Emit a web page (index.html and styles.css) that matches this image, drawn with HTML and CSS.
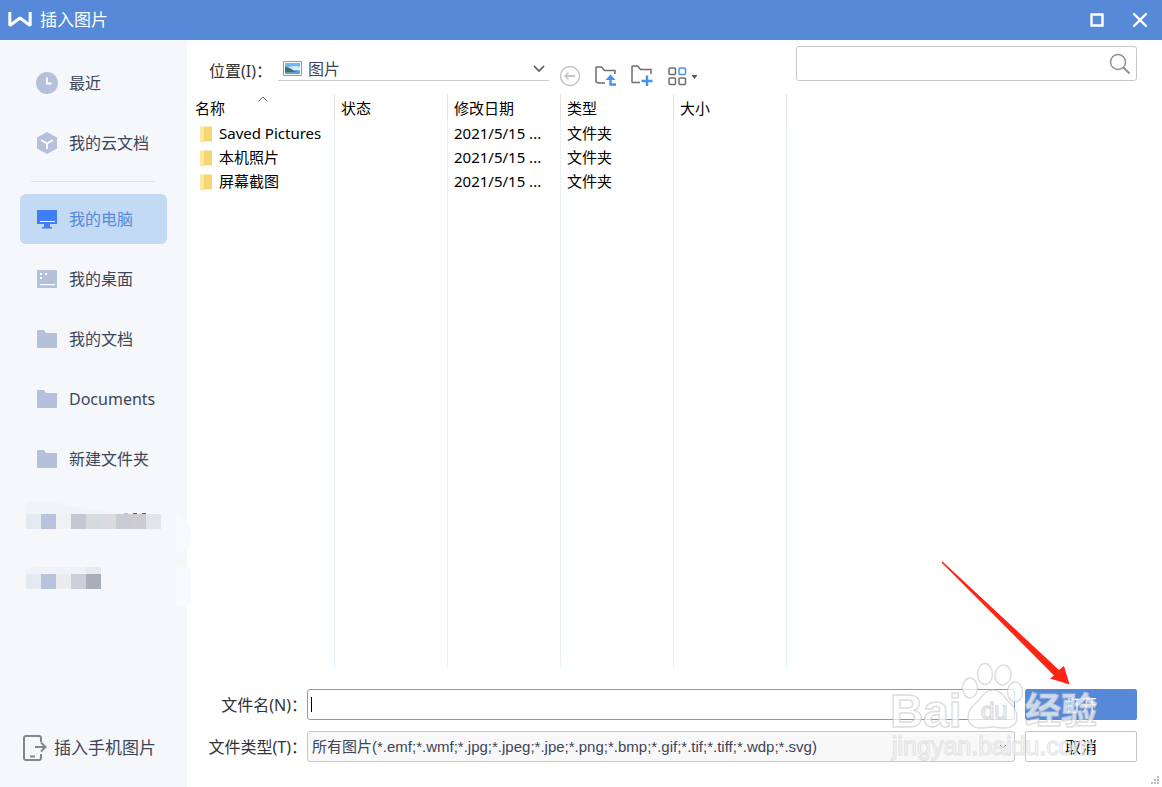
FILE: index.html
```html
<!DOCTYPE html>
<html lang="zh-CN">
<head>
    <meta charset="UTF-8">
    <meta name="viewport" content="width=device-width, initial-scale=1.0">
    <title>插入图片</title>
    <link rel="stylesheet" href="styles.css">
</head>
<body>
    <!-- Title bar -->
    <header class="titlebar">
        <svg width="24" height="16" viewBox="0 0 24 16" fill="none" stroke="#fff" stroke-width="3"><path d="M1.8 0v13.500L12 6l10.200 7.500V0" stroke-linejoin="bevel"/></svg>
        <h1>插入图片</h1>
        <button class="window-btn" type="button" aria-label="最大化">
            <svg width="14" height="14" viewBox="0 0 14 14" fill="none" stroke="#fff" stroke-width="2.400"><path d="M1.500 1.500h11v11h-11z"/></svg>
        </button>
        <button class="window-btn" type="button" aria-label="关闭">
            <svg width="14" height="14" viewBox="0 0 14 14" fill="none" stroke="#fff" stroke-width="2.400" stroke-linecap="round"><path d="M1 1l12 12M13 1L1 13"/></svg>
        </button>
    </header>

    <div class="dialog">
        <!-- Sidebar -->
        <nav class="sidebar">
            <a class="item" href="#">
                <svg width="22" height="22" viewBox="0 0 22 22"><circle cx="11" cy="11" r="11" fill="#b5c1da"/><path d="M11 5.500v6h4.500" fill="none" stroke="#fff" stroke-width="1.800"/></svg>
                最近
            </a>
            <a class="item" href="#">
                <svg width="22" height="22" viewBox="0 0 22 22"><path d="M11 0l10 5.500v11L11 22 1 16.500v-11z" fill="#b5c1da"/><path d="M5 8l6 3.500L17 8M11 11.500V17" fill="none" stroke="#fff" stroke-width="1.800"/></svg>
                我的云文档
            </a>
            <hr>
            <a class="item active" href="#">
                <svg width="22" height="22" viewBox="0 0 22 22"><path d="M1 2h20v14H1z" fill="#407ef8"/><path d="M4 13.500h15" stroke="#fff" stroke-width="1"/><path d="M8 16h6v3h2v1.500H6V19h2z" fill="#407ef8"/></svg>
                我的电脑
            </a>
            <a class="item" href="#">
                <svg width="22" height="22" viewBox="0 0 22 22"><rect x="1" y="2" width="20" height="18" rx="1" fill="#b5c1da"/><path d="M4 5h2v2H4zM9 5h2v2H9zM4 9h2v2H4zM4 16h15v1.200H4z" fill="#fff"/></svg>
                我的桌面
            </a>
            <a class="item" href="#">
                <svg width="22" height="22" viewBox="0 0 22 22"><path d="M1 3q0-1 1-1h6l2 3h11v14q0 1-1 1H2q-1 0-1-1z" fill="#b5c1da"/></svg>
                我的文档
            </a>
            <a class="item" href="#">
                <svg width="22" height="22" viewBox="0 0 22 22"><path d="M1 3q0-1 1-1h6l2 3h11v14q0 1-1 1H2q-1 0-1-1z" fill="#b5c1da"/></svg>
                Documents
            </a>
            <a class="item" href="#">
                <svg width="22" height="22" viewBox="0 0 22 22"><path d="M1 3q0-1 1-1h6l2 3h11v14q0 1-1 1H2q-1 0-1-1z" fill="#b5c1da"/></svg>
                新建文件夹
            </a>
            <!-- Folders with hidden names -->
            <a class="item hidden-name" href="#" aria-label="文件夹">
                <svg width="135" height="50" viewBox="0 0 135 50">
                    <path d="M0 20V10q4-3 12-3 18 0 38 6 25 5 50 7h35v1H0z" fill="#f0f4f8"/>
                    <path d="M0 20h15v15H0z" fill="#e4e9f2"/>
                    <path d="M15 20h15v15H15z" fill="#b7c3dc"/>
                    <path d="M30 20h15v15H30z" fill="#eff1f4"/>
                    <path d="M45 20h15v15H45z" fill="#c5c8d1"/>
                    <path d="M60 20h15v15H60z" fill="#d6dbdf"/>
                    <path d="M75 20h15v15H75z" fill="#dadbdf"/>
                    <path d="M90 20h15v15H90z" fill="#c9ccd5"/>
                    <path d="M105 20h15v15h-15z" fill="#cdcdd1"/>
                    <path d="M120 20h15v15h-15z" fill="#e0e5ed"/>
                    <path d="M98 19h4v1h-4z" fill="#c0c4ca"/>
                    <path d="M107 19h4v1h-4zM116 19h4v1h-4z" fill="#555c6b"/>
                    <path d="M150 21q15 4 15 19t-15 20z" fill="#f8fafd"/>
                </svg>
            </a>
            <a class="item hidden-name" href="#" aria-label="文件夹">
                <svg width="135" height="50" viewBox="0 0 135 50">
                    <path d="M0 20v-5q4-2 15-2h45v7z" fill="#eff3f7"/>
                    <path d="M60 13h15v7H60z" fill="#e8eaef"/>
                    <path d="M0 20h15v15H0z" fill="#e4e9f2"/>
                    <path d="M15 20h15v15H15z" fill="#b7c3dc"/>
                    <path d="M30 20h15v15H30z" fill="#ececee"/>
                    <path d="M45 20h15v15H45z" fill="#c9d0d9"/>
                    <path d="M60 20h15v15H60z" fill="#a9aeba"/>
                    <path d="M150 13h12q3 0 3 3v34q-6 3-15 3z" fill="#f8fafd"/>
                </svg>
            </a>
            <a class="phone" href="#">
                <svg width="24" height="26" viewBox="0 0 24 26" fill="none" stroke="#868686" stroke-width="2"><path d="M18 7V3q0-2-2-2H3Q1 1 1 3v20q0 2 2 2h13q2 0 2-2v-4M7 21.500h5M12 12h10M18 7.500l4.500 4.500-4.500 4.500"/></svg>
                插入手机图片
            </a>
        </nav>

        <main class="content">
            <!-- Location and search -->
            <div class="toolbar">
                <label for="place">位置(I)：</label>
                <div class="place">
                    <svg width="19" height="16" viewBox="0 0 19 16"><path d="M.5.500h18v14H.5z" fill="#fff" stroke="#999"/><path d="M2 2h15v11H2z" fill="#74b4f0"/><path d="M2 8q8-5 15-2v3H2z" fill="#d4ecfb"/><path d="M2 6q5 0 9 4l6 1v2H2z" fill="#47705f"/><path d="M2 11h15v2H2z" fill="#5da0d0"/></svg>
                    <select id="place">
                        <option>图片</option>
                    </select>
                    <svg class="chevron" width="12" height="8" viewBox="0 0 12 8" fill="none" stroke="#555" stroke-width="1.600"><path d="M1 1l5 5 5-5"/></svg>
                </div>
                <div class="tools">
                    <button type="button" aria-label="后退">
                        <svg width="22" height="22" viewBox="0 0 22 22" fill="none" stroke="#c6c6c6" stroke-width="1.500"><circle cx="11" cy="11" r="9.500"/><path d="M6 11h10" stroke-width="2"/><path d="M9.500 7.500L6 11l3.500 3.500"/></svg>
                    </button>
                    <button type="button" aria-label="上一级">
                        <svg width="22" height="22" viewBox="0 0 22 22" fill="none" stroke="#6e6e6e" stroke-width="1.500"><path d="M10 18H3.500L1 17V2.500Q1 2 1.500 2h5l3 3.500h10.500V9"/><path d="M21 19.500h-5.500V12" stroke="#4592f5" stroke-width="2.400"/><path d="M10.500 15l5-5.500 5 5.500z" fill="#4592f5" stroke="none"/></svg>
                    </button>
                    <button type="button" aria-label="新建文件夹">
                        <svg width="22" height="22" viewBox="0 0 22 22" fill="none" stroke="#6e6e6e" stroke-width="1.500"><path d="M9 17.500H1.500q-.5 0-.5-.5V1.500Q1 1 1.500 1h5l3 3.500h10.500V9"/><path d="M16 10.500v10.500M10.500 16h11" stroke="#4592f5" stroke-width="2.400"/></svg>
                    </button>
                    <button type="button" aria-label="视图">
                        <svg width="30" height="22" viewBox="0 0 30 22" fill="none" stroke="#6e6e6e" stroke-width="1.500"><rect x="2" y="3" width="6.500" height="6.500" rx="1"/><rect x="12" y="3" width="6.500" height="6.500" rx="1" stroke="#4592f5"/><rect x="2" y="13" width="6.500" height="6.500" rx="1"/><rect x="12" y="13" width="6.500" height="6.500" rx="1"/><path d="M24.500 10h6l-3 4z" fill="#555" stroke="none"/></svg>
                    </button>
                </div>
                <div class="search">
                    <input type="text" aria-label="搜索">
                    <svg width="22" height="22" viewBox="0 0 22 22" fill="none" stroke="#929292" stroke-width="1.500"><circle cx="9" cy="9" r="7.500"/><path d="M14.500 14.500l6 6" stroke-width="2"/></svg>
                </div>
            </div>

            <!-- File list -->
            <div class="files">
                <table>
                    <thead>
                        <tr>
                            <th class="name">名称<svg width="10" height="6" viewBox="0 0 10 6" fill="none" stroke="#666"><path d="M.5 5.500L5 1l4.500 4.500"/></svg></th>
                            <th>状态</th>
                            <th>修改日期</th>
                            <th>类型</th>
                            <th>大小</th>
                        </tr>
                    </thead>
                    <tbody>
                        <tr>
                            <td class="file"><span class="folder"></span>Saved Pictures</td>
                            <td></td>
                            <td>2021/5/15 ...</td>
                            <td>文件夹</td>
                            <td></td>
                        </tr>
                        <tr>
                            <td class="file"><span class="folder"></span>本机照片</td>
                            <td></td>
                            <td>2021/5/15 ...</td>
                            <td>文件夹</td>
                            <td></td>
                        </tr>
                        <tr>
                            <td class="file"><span class="folder"></span>屏幕截图</td>
                            <td></td>
                            <td>2021/5/15 ...</td>
                            <td>文件夹</td>
                            <td></td>
                        </tr>
                        <tr class="rest"><td></td><td></td><td></td><td></td><td></td></tr>
                    </tbody>
                </table>
            </div>

            <!-- File name, type and actions -->
            <form class="actions">
                <label for="filename">文件名(N)：</label>
                <div class="field name-field">
                    <input id="filename" type="text">
                    <svg class="chevron" width="8" height="6" viewBox="0 0 8 6" fill="none" stroke="#aaa"><path d="M1 1l3 3 3-3"/></svg>
                </div>
                <button class="open" type="button">打开</button>
                <label for="filetype">文件类型(T)：</label>
                <div class="field">
                    <select id="filetype">
                        <option>所有图片(*.emf;*.wmf;*.jpg;*.jpeg;*.jpe;*.png;*.bmp;*.gif;*.tif;*.tiff;*.wdp;*.svg)</option>
                    </select>
                    <svg class="chevron" width="8" height="6" viewBox="0 0 8 6" fill="none" stroke="#777"><path d="M1 1l3 3 3-3"/></svg>
                </div>
                <button class="cancel" type="button">取消</button>
            </form>
        </main>
    </div>

    <!-- Arrow, watermark and resize grip over the dialog -->
    <svg class="overlay" width="280" height="235" viewBox="882 552 280 235">
        <path d="M942.500 561.500L1059 670l5-4 5.500 18.500-19.500-6 4-3L941.500 562.500z" fill="#ff2415"/>
        <g class="mark">
            <text class="bai" x="890" y="727">Bai</text>
            <ellipse cx="970" cy="688" rx="7.500" ry="10"/>
            <ellipse cx="985" cy="674" rx="7.500" ry="10.500"/>
            <ellipse cx="1003" cy="675" rx="8" ry="10" transform="rotate(10 1003 675)"/>
            <ellipse cx="1015" cy="692" rx="7.500" ry="10"/>
            <path d="M993 690c7 0 10 5 14 10 5 5 10 9 10 17 0 7-5 11-12 11-6 0-8-1-12-1s-7 1-13 1c-7 0-12-4-12-11 0-8 6-12 11-17 4-5 7-10 14-10z"/>
            <text class="du" x="981" y="719">du</text>
            <text class="jingyan" x="1025" y="724">经验</text>
            <text class="url" x="892" y="755">jingyan.baidu.com</text>
        </g>
        <path d="M1157 776h2v2h-2zM1154 779h2v2h-2zM1157 779h2v2h-2zM1151 782h2v2h-2zM1154 782h2v2h-2zM1157 782h2v2h-2z" fill="#bbb"/>
    </svg>
</body>
</html>
```
FILE: styles.css
```css
* {
    box-sizing: border-box;
}

body {
    position: relative;
    display: flex;
    flex-direction: column;
    min-height: 100vh;
    margin: 0;
    background: #fff;
    color: #333;
    font-family: "Noto Sans", "Noto Sans CJK SC", sans-serif;
    font-size: 16px;
    line-height: 24px;
}

button, input, select {
    margin: 0;
    font: inherit;
    color: inherit;
}

select {
    appearance: none;
    border: 0;
    outline: 0;
}

svg {
    flex: none;
    display: block;
}

.titlebar {
    display: flex;
    align-items: center;
    gap: 8px;
    height: 40px;
    padding: 0 7px 0 8px;
    background: #568ad9;
    color: #fff;
}

.titlebar h1 {
    flex: 1;
    margin: 0;
    font-size: 17px;
    font-weight: normal;
}

.window-btn {
    display: flex;
    align-items: center;
    justify-content: center;
    width: 30px;
    height: 30px;
    margin-left: 5px;
    padding: 0;
    border: 0;
    background: none;
}

.dialog {
    flex: 1;
    display: flex;
}

.sidebar {
    flex: none;
    display: flex;
    flex-direction: column;
    gap: 10px;
    width: 187px;
    padding: 18px 20px 26px;
    background: #f5f7fb;
}

.sidebar a {
    color: #3d455a;
    text-decoration: none;
}

.sidebar hr {
    width: 124px;
    height: 1px;
    margin: 3px 0 2px 11px;
    border: 0;
    background: #dfe2e8;
}

.item {
    display: flex;
    align-items: center;
    gap: 11px;
    height: 50px;
    padding-left: 16px;
    border-radius: 6px;
}

.sidebar .active {
    background: #c2daf3;
    color: #568ad9;
}

.hidden-name {
    padding-left: 6px;
}

.hidden-name svg {
    overflow: visible;
}

.phone {
    display: flex;
    align-items: center;
    gap: 7px;
    margin: auto 0 0 3px;
    font-size: 17px;
    white-space: nowrap;
}

.content {
    flex: 1;
    display: flex;
    flex-direction: column;
    min-width: 0;
}

.toolbar {
    display: flex;
    align-items: flex-start;
    height: 54px;
    padding: 6px 25px 0 22px;
}

.toolbar label {
    width: 69px;
    margin-top: 13px;
    white-space: nowrap;
}

.place {
    display: flex;
    align-items: center;
    width: 271px;
    height: 23px;
    margin-top: 12px;
    padding: 0 4px 0 5px;
    border-bottom: 1px solid #ccc;
}

.place select {
    flex: 1;
    padding: 0 0 0 6px;
    background: none;
    color: #3d455a;
}

.tools {
    display: flex;
    gap: 14px;
    margin: 19px 0 0 10px;
}

.tools button {
    padding: 0;
    border: 0;
    background: none;
}

.search {
    display: flex;
    align-items: center;
    width: 341px;
    height: 35px;
    margin-left: auto;
    padding: 0 5px;
    border: 1px solid #c8c8c8;
    border-radius: 3px;
}

.search input {
    flex: 1;
    min-width: 0;
    border: 0;
    outline: 0;
}

.files {
    flex: 1;
    display: flex;
}

table {
    width: 600px;
    table-layout: fixed;
    border-collapse: separate;
    border-spacing: 0;
    color: #000;
    font-size: 15px;
}

th, td {
    height: 24px;
    padding: 0 0 0 6px;
    border-right: 1px solid #e6f1fb;
    line-height: 24px;
    text-align: left;
    white-space: nowrap;
}

th {
    height: 27px;
    border-right-color: #e2e2e2;
    font-weight: normal;
}

.name {
    position: relative;
    width: 148px;
    padding-left: 8px;
}

.name svg {
    position: absolute;
    top: 2px;
    left: 71px;
}

.file {
    padding-left: 13px;
}

.folder {
    display: inline-block;
    width: 12px;
    height: 17px;
    margin-right: 7px;
    background: linear-gradient(90deg, #ffe9a2 4px, #f6d673 4px);
    clip-path: polygon(0 0, 100% 0, 100% 88%, 33% 88%, 25% 100%, 0 88%);
    vertical-align: middle;
}

.rest td {
    height: auto;
}

.actions {
    display: grid;
    grid-template-columns: 112px 1fr 112px;
    align-items: center;
    gap: 11px 0;
    padding: 20px 25px 25px 8px;
}

.actions label {
    text-align: right;
    white-space: nowrap;
}

.actions button {
    height: 31px;
    padding: 0;
    border: 1px solid #c3c5ce;
    border-radius: 2px;
    background: #fff;
    color: #000;
}

.actions .open {
    border-color: #568ad9;
    background: #568ad9;
    color: #fff;
}

.field {
    display: flex;
    align-items: center;
    min-width: 0;
    height: 31px;
    margin-right: 10px;
    padding-right: 7px;
    border: 1px solid #c8c8c8;
    border-radius: 3px;
    background: #f8f8f8;
    color: #3d455a;
    font-family: "Liberation Sans", "Noto Sans CJK SC", sans-serif;
    font-size: 15px;
}

.field input, .field select {
    flex: 1;
    min-width: 0;
    height: 29px;
    padding: 0 4px;
    border: 0;
    outline: 0;
    background: none;
}

.name-field {
    border-color: #6e9ce8;
    background: #fff;
}

/* text cursor */
.field input {
    background: linear-gradient(#000, #000) 3px center / 1px 15px no-repeat;
}

.overlay {
    position: absolute;
    right: 0;
    bottom: 0;
    pointer-events: none;
}

.mark {
    fill: rgba(255, 255, 255, 0.7);
    stroke: rgba(200, 200, 204, 0.6);
    stroke-width: 1.5px;
    font-family: "Liberation Sans", "Noto Sans CJK SC", sans-serif;
}

.bai {
    font-size: 46px;
    font-weight: bold;
}

.du {
    font-size: 24px;
}

.jingyan {
    font-size: 36px;
    font-weight: bold;
}

.url {
    font-size: 25px;
    stroke: rgba(205, 205, 208, 0.45);
}
```
